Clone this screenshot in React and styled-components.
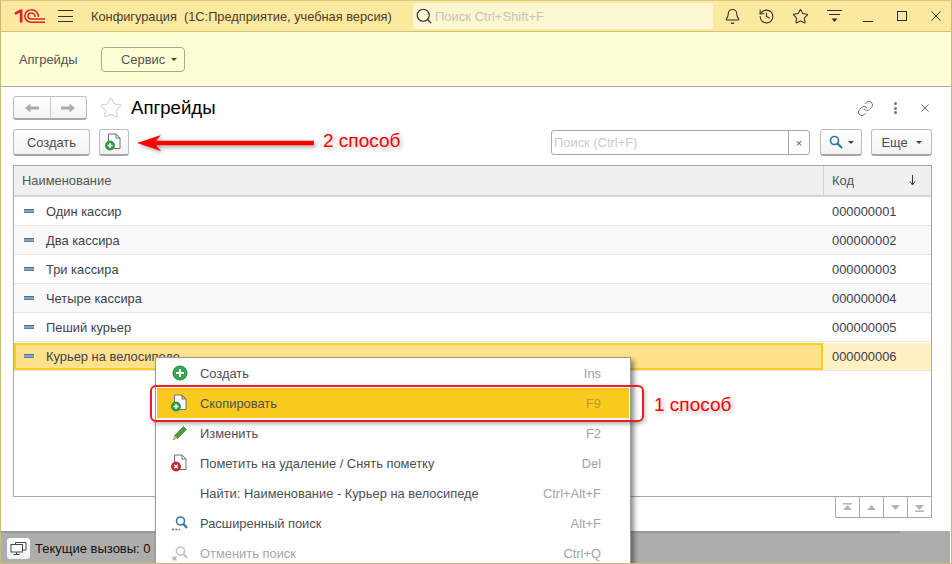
import styled, { createGlobalStyle } from 'styled-components';
import { Bell, History, Star, Link, Search } from 'lucide-react';

const Global = createGlobalStyle`
  html, body { margin: 0; padding: 0; background: #fff; }
  body { font-family: "Liberation Sans", Arial, sans-serif; font-size: 12.9px; color: #4b4b4b; }
`;

const Win = styled.div`
  position: relative;
  width: 952px;
  height: 564px;
  box-sizing: border-box;
  overflow: hidden;
  display: flex;
  flex-direction: column;
  background: #fff;
  border-left: 1px solid #c9bb74;
  border-right: 1px solid #c9bb74;
  border-bottom: 1px solid #c9bb74;
`;

const TopBar = styled.div`
  height: 32px;
  flex: none;
  box-sizing: border-box;
  display: flex;
  align-items: center;
  background: #fbe99f;
  border-top: 1px solid #d8ca80;
  border-bottom: 1px solid #d2c173;
`;

const Logo = styled.svg`
  margin-left: 13px;
  width: 31px;
  height: 14px;
  flex: none;
`;

const Burger = styled.div`
  margin-left: 13px;
  width: 15px;
  height: 12px;
  flex: none;
  box-sizing: border-box;
  border-top: 1px solid #333;
  border-bottom: 1px solid #333;
  display: flex;
  align-items: center;
  &::before { content: ''; display: block; width: 100%; height: 1px; background: #333; }
`;

const TopTitle = styled.div`
  margin-left: 18px;
  width: 322px;
  flex: none;
  font-size: 12.8px;
  white-space: pre;
  color: #4d3b2c;
`;

const TopSearch = styled.div`
  width: 300px;
  height: 26px;
  flex: none;
  box-sizing: border-box;
  display: flex;
  align-items: center;
  gap: 2px;
  padding-left: 2px;
  background: #fdf6d2;
  border-radius: 3px;
  color: #c8c5b4;
  font-size: 13px;
`;

const TopIcons = styled.div`
  display: flex;
  margin-left: 2px;
`;

const TopIcon = styled.div`
  width: 34px;
  height: 24px;
  display: flex;
  align-items: center;
  justify-content: center;
  color: #2f2f2f;
`;

const Section = styled.div`
  height: 55px;
  flex: none;
  box-sizing: border-box;
  display: flex;
  align-items: center;
  padding-left: 18px;
  background: #ffffd6;
  border-bottom: 1px solid #a9a9a9;
`;

const SectionName = styled.div`
  width: 82px;
  font-size: 12.9px;
  color: #55505c;
`;

const SectionBtn = styled.div`
  width: 84px;
  height: 25px;
  box-sizing: border-box;
  display: flex;
  align-items: center;
  padding-left: 19px;
  gap: 6px;
  border: 1px solid #aaa78c;
  border-radius: 4px;
  font-size: 12.9px;
  color: #55505c;
`;

const Caret = styled.span`
  display: inline-block;
  width: 0;
  height: 0;
  border-left: 3px solid transparent;
  border-right: 3px solid transparent;
  border-top: 3px solid #444;
`;

const Form = styled.div`
  flex: 1;
  min-height: 0;
  display: flex;
  flex-direction: column;
  padding: 8px 19px 0 12px;
`;

const FormHead = styled.div`
  height: 26px;
  flex: none;
  margin-right: -8px;
  display: flex;
  align-items: center;
`;

const NavGroup = styled.div`
  width: 74px;
  height: 24px;
  box-sizing: border-box;
  display: flex;
  background: linear-gradient(#fff, #f4f4f4);
  border: 1px solid #bdbdbd;
  border-bottom: 2px solid #a9a9a9;
  border-radius: 3px;
`;

const NavCell = styled.div`
  flex: 1;
  display: flex;
  align-items: center;
  justify-content: center;
  & + & { border-left: 1px solid #c9c9c9; }
`;

const StarWrap = styled.div`
  margin-left: 11px;
  width: 26px;
  height: 26px;
  display: flex;
  align-items: center;
  justify-content: center;
`;

const Title = styled.div`
  margin-left: 7px;
  font-size: 18.6px;
  color: #000;
  flex: 1;
`;

const HeadIcon = styled.div`
  width: 30px;
  height: 24px;
  display: flex;
  align-items: center;
  justify-content: center;
  color: #5f5f5f;
`;

const Dots = styled.div`
  display: flex;
  flex-direction: column;
  gap: 1.5px;
  & i { display: block; width: 3px; height: 3px; border-radius: 50%; background: #777; }
`;

const CmdBar = styled.div`
  margin-top: 8px;
  height: 27px;
  flex: none;
  display: flex;
  align-items: center;
`;

const Btn = styled.div`
  width: ${p => p.$w}px;
  height: 27px;
  flex: none;
  box-sizing: border-box;
  margin-right: ${p => p.$gap || 0}px;
  display: flex;
  align-items: center;
  justify-content: center;
  gap: ${p => p.$inner || 5}px;
  background: linear-gradient(#fff, #f3f3f3);
  border: 1px solid #bdbdbd;
  border-bottom: 2px solid #a6a6a6;
  border-radius: 3px;
  color: #4b4b4b;
`;

const Spacer = styled.div`
  flex: 1;
`;

const FindBox = styled.div`
  width: 259px;
  height: 25px;
  flex: none;
  box-sizing: border-box;
  margin-right: 10px;
  display: flex;
  align-items: center;
  border: 1px solid #a9a9a9;
  border-radius: 3px;
  color: #c9c9c9;
`;

const FindText = styled.div`
  flex: 1;
  padding-left: 2px;
`;

const FindClear = styled.div`
  width: 20px;
  height: 100%;
  display: flex;
  align-items: center;
  justify-content: center;
  border-left: 1px solid #a9a9a9;
  color: #555;
  font-size: 11px;
`;

const Table = styled.div`
  margin-top: 9px;
  flex: 1;
  min-height: 0;
  box-sizing: border-box;
  border: 1px solid #a9a9a9;
`;

const HeadRow = styled.div`
  height: 31px;
  box-sizing: border-box;
  display: grid;
  grid-template-columns: 809px 1fr;
  background: #f0f0f0;
  border-bottom: 2px solid #d4d4d4;
  color: #555;
`;

const HeadCell = styled.div`
  display: flex;
  align-items: center;
  justify-content: space-between;
  padding: 0 15px 0 8px;
  & + & { border-left: 1px solid #d4d4d4; }
`;

const Row = styled.div`
  height: 29px;
  box-sizing: border-box;
  display: grid;
  grid-template-columns: 809px 1fr;
  align-items: stretch;
  background: ${p => (p.$sel ? '#fff' : p.$alt ? '#f9f9f9' : '#fff')};
  border-bottom: 1px solid #e6e6e6;
  color: #3f3f4f;
`;

const NameCell = styled.div`
  display: flex;
  align-items: center;
  gap: 12px;
  box-sizing: border-box;
  padding: ${p => (p.$sel ? '0 0 0 8px' : '1px 0 0 10px')};
  margin-top: ${p => (p.$sel ? '1px' : '0')};
  background: ${p => (p.$sel ? '#ffe28a' : 'transparent')};
  border: ${p => (p.$sel ? '2px solid #fccb22' : '0')};
`;

const CodeCell = styled.div`
  display: flex;
  align-items: center;
  box-sizing: border-box;
  padding: ${p => (p.$sel ? '0 0 0 9px' : '1px 0 0 9px')};
  margin-top: ${p => (p.$sel ? '1px' : '0')};
  background: ${p => (p.$sel ? '#fff1c2' : 'transparent')};
`;

const Dash = styled.span`
  width: 10px;
  height: 4px;
  box-sizing: border-box;
  flex: none;
  background: #7fa6c4;
  border-top: 1px solid #4f6f8a;
  border-bottom: 1px solid #5f7f99;
  position: relative;
  top: -1px;
`;

const Pager = styled.div`
  height: 21px;
  flex: none;
  display: flex;
  justify-content: flex-end;
  margin-bottom: 13px;
`;

const PagerBtn = styled.div`
  width: 24px;
  box-sizing: border-box;
  display: flex;
  align-items: center;
  justify-content: center;
  border: 1px solid #a9a9a9;
  border-top: 0;
  &:first-child { width: 25px; }
  & + & { border-left: 0; }
`;

const StatusBar = styled.div`
  height: 32px;
  flex: none;
  box-sizing: border-box;
  display: flex;
  align-items: center;
  gap: 5px;
  padding: 2px 0 0 6px;
  margin-right: 1px;
  background: linear-gradient(#999, #999) no-repeat 0 0 / 899px 2px, #adadad;
  color: #111;
  font-size: 13px;
`;

const StatusBtn = styled.div`
  width: 23px;
  height: 21px;
  display: flex;
  align-items: center;
  justify-content: center;
  background: linear-gradient(#fff, #f1f1f1);
  border-radius: 3px;
`;

const Menu = styled.div`
  position: absolute;
  left: 154px;
  top: 357px;
  width: 476px;
  box-sizing: border-box;
  background: #fff;
  border: 1px solid #9a9a9a;
  box-shadow: 3px 3px 5px rgba(0, 0, 0, 0.45);
`;

const MenuItem = styled.div`
  height: 30px;
  box-sizing: border-box;
  display: grid;
  grid-template-columns: 43px 1fr auto;
  align-items: center;
  padding: 0 28px 0 0;
  margin: 0 1px;
  color: ${p => (p.$off ? '#a6a6a6' : '#4e4e55')};
  background: ${p => (p.$active ? 'linear-gradient(#e8bc1c, #f9cb1e 4px)' : 'transparent')};
`;

const MenuIcon = styled.div`
  display: flex;
  justify-content: center;
  padding-left: 3px;
`;

const Hotkey = styled.div`
  color: ${p => (p.$active ? '#b99a2a' : '#a3a3a3')};
`;

const Highlight = styled.div`
  position: absolute;
  left: 149px;
  top: 385px;
  width: 494px;
  height: 37px;
  box-sizing: border-box;
  border: 2px solid #ee1c25;
  border-radius: 6px;
  box-shadow: 1px 2px 4px rgba(0, 0, 0, 0.3);
`;

const Note = styled.div`
  position: absolute;
  left: ${p => p.$x}px;
  top: ${p => p.$y}px;
  font-size: 19px;
  color: #f00;
  white-space: nowrap;
  text-shadow: 2px 2px 4px rgba(0, 0, 0, 0.3);
`;

const ArrowSvg = styled.svg`
  position: absolute;
  left: 135px;
  top: 130px;
  filter: drop-shadow(2px 2px 2px rgba(0, 0, 0, 0.35));
`;

const NavArrow = ({ dir }) => (
  <svg width="16" height="12" viewBox="0 0 16 12">
    <path
      d={dir === 'left' ? 'M1 6 L6.5 1.5 V4.5 H15 V7.5 H6.5 V10.5 Z' : 'M15 6 L9.5 1.5 V4.5 H1 V7.5 H9.5 V10.5 Z'}
      fill="#ababab"
    />
  </svg>
);

const FileBase = () => (
  <path d="M3.5 1 H11 L15 5 V15.5 H3.5 Z M11 1 V5 H15" fill="#fff" stroke="#66727f" strokeWidth="1" />
);

const FilePlus = () => (
  <svg width="18" height="18" viewBox="0 0 18 18">
    <FileBase />
    <circle cx="5" cy="12.5" r="4.5" fill="#2ea043" stroke="#177a2c" strokeWidth="0.8" />
    <path d="M2.5 12.5 H7.5 M5 10 V15" stroke="#fff" strokeWidth="1.5" />
  </svg>
);

const FileCross = () => (
  <svg width="18" height="18" viewBox="0 0 18 18">
    <FileBase />
    <circle cx="5" cy="12.5" r="4.5" fill="#d5252c" stroke="#a81a20" strokeWidth="0.8" />
    <path d="M3.2 10.7 L6.8 14.3 M6.8 10.7 L3.2 14.3" stroke="#fff" strokeWidth="1.3" />
  </svg>
);

const PlusCircle = () => (
  <svg width="16" height="16" viewBox="0 0 16 16">
    <circle cx="8" cy="8" r="7" fill="#35a853" stroke="#1f8a3b" />
    <path d="M4 8 H12 M8 4 V12" stroke="#fff" strokeWidth="2" />
  </svg>
);

const Pencil = () => (
  <svg width="16" height="16" viewBox="0 0 16 16">
    <path d="M11.5 1.5 L14.5 4.5 L5.5 13.5 L2.5 10.5 Z" fill="#4f9a3e" stroke="#3c7a30" strokeWidth="0.6" />
    <path d="M2.5 10.5 L5.5 13.5 L1 15 Z" fill="#e0a860" />
    <path d="M1.8 13.4 L2.7 14.3 L1 15 Z" fill="#444" />
  </svg>
);

const FindIcon = ({ off }) => (
  <svg width="18" height="16" viewBox="0 0 18 16">
    <circle cx="9.5" cy="6" r="4" fill="none" stroke={off ? '#c4c4c4' : '#2f77ad'} strokeWidth="1.6" />
    <path d="M12.5 9 L16 13" stroke={off ? '#c4c4c4' : '#2f77ad'} strokeWidth="2.2" />
    {off ? (
      <path d="M1.5 11.5 L5.5 15.5 M5.5 11.5 L1.5 15.5" stroke="#c9a5a5" strokeWidth="1.4" />
    ) : (
      <path d="M1 14.5 H9" stroke="#2f77ad" strokeWidth="1.4" strokeDasharray="2 1.4" />
    )}
  </svg>
);

const PagerIcon = ({ up, bar }) => (
  <svg width="11" height="9" viewBox="0 0 11 9">
    {up ? <path d="M5.5 2 L10 7 H1 Z" fill="#b4b4b4" /> : <path d="M5.5 7 L10 2 H1 Z" fill="#b4b4b4" />}
    {bar && <rect x="1" y={up ? 0 : 7.5} width="9" height="1.5" fill="#b4b4b4" />}
  </svg>
);

const rows = [
  ['Один кассир', '000000001'],
  ['Два кассира', '000000002'],
  ['Три кассира', '000000003'],
  ['Четыре кассира', '000000004'],
  ['Пеший курьер', '000000005'],
  ['Курьер на велосипеде', '000000006'],
];

const menu = [
  { icon: <PlusCircle />, text: 'Создать', key: 'Ins' },
  { icon: <FilePlus />, text: 'Скопировать', key: 'F9', active: true },
  { icon: <Pencil />, text: 'Изменить', key: 'F2' },
  { icon: <FileCross />, text: 'Пометить на удаление / Снять пометку', key: 'Del' },
  { text: 'Найти: Наименование - Курьер на велосипеде', key: 'Ctrl+Alt+F' },
  { icon: <FindIcon />, text: 'Расширенный поиск', key: 'Alt+F' },
  { icon: <FindIcon off />, text: 'Отменить поиск', key: 'Ctrl+Q', off: true },
];

export default function App() {
  return (
    <>
      <Global />
      <Win>
        <TopBar>
          <Logo viewBox="0 0 31 14">
            <path d="M0.5 3.6 L6 0.5 H8.5 V13.5 H5.8 V3.6 L1.5 6 Z" fill="#d9232b" />
            <g fill="none" stroke="#d9232b" strokeWidth="1.5">
              <path d="M24.5 8 A7 7 0 0 0 17 0.8 A6.2 6.2 0 0 0 17 13.2 H31" />
              <path d="M21 8 A3.6 3.6 0 0 0 17 4 A3 3 0 0 0 17 10 H31" />
            </g>
          </Logo>
          <Burger />
          <TopTitle>Конфигурация  (1С:Предприятие, учебная версия)</TopTitle>
          <TopSearch>
            <Search size={18} color="#333" strokeWidth={1.6} />
            Поиск Ctrl+Shift+F
          </TopSearch>
          <TopIcons>
            <TopIcon><Bell size={17} strokeWidth={1.5} /></TopIcon>
            <TopIcon><History size={17} strokeWidth={1.5} /></TopIcon>
            <TopIcon><Star size={17} strokeWidth={1.5} /></TopIcon>
            <TopIcon>
              <svg width="15" height="14" viewBox="0 0 15 14">
                <path d="M0 1.5 H15 M2 5.5 H13" stroke="#2f2f2f" fill="none" />
                <path d="M4.5 9.5 H10.5 L7.5 13 Z" fill="#2f2f2f" />
              </svg>
            </TopIcon>
            <TopIcon>
              <svg width="10" height="14" viewBox="0 0 10 14"><path d="M0 12.5 H10" stroke="#2f2f2f" /></svg>
            </TopIcon>
            <TopIcon>
              <svg width="10" height="10" viewBox="0 0 10 10"><rect x="0.5" y="0.5" width="9" height="9" fill="none" stroke="#2f2f2f" /></svg>
            </TopIcon>
            <TopIcon>
              <svg width="10" height="10" viewBox="0 0 10 10"><path d="M0.5 0.5 L9.5 9.5 M9.5 0.5 L0.5 9.5" stroke="#2f2f2f" /></svg>
            </TopIcon>
          </TopIcons>
        </TopBar>

        <Section>
          <SectionName>Апгрейды</SectionName>
          <SectionBtn>Сервис <Caret /></SectionBtn>
        </Section>

        <Form>
          <FormHead>
            <NavGroup>
              <NavCell><NavArrow dir="left" /></NavCell>
              <NavCell><NavArrow dir="right" /></NavCell>
            </NavGroup>
            <StarWrap><Star size={24} color="#c9c9d0" strokeWidth={1} /></StarWrap>
            <Title>Апгрейды</Title>
            <HeadIcon><Link size={17} strokeWidth={1.2} /></HeadIcon>
            <HeadIcon><Dots><i /><i /><i /></Dots></HeadIcon>
            <HeadIcon>
              <svg width="8" height="8" viewBox="0 0 8 8"><path d="M0.5 0.5 L7.5 7.5 M7.5 0.5 L0.5 7.5" stroke="#666" /></svg>
            </HeadIcon>
          </FormHead>

          <CmdBar>
            <Btn $w={77} $gap={9}>Создать</Btn>
            <Btn $w={30}><FilePlus /></Btn>
            <Spacer />
            <FindBox>
              <FindText>Поиск (Ctrl+F)</FindText>
              <FindClear>×</FindClear>
            </FindBox>
            <Btn $w={42} $gap={9}>
              <svg width="14" height="14" viewBox="0 0 14 14">
                <circle cx="5.5" cy="5.5" r="4" fill="none" stroke="#2f77ad" strokeWidth="1.7" />
                <path d="M8.5 8.5 L13 13" stroke="#2f77ad" strokeWidth="2.2" />
              </svg>
              <Caret />
            </Btn>
            <Btn $w={61} $inner={8}>Еще <Caret /></Btn>
          </CmdBar>

          <Table>
            <HeadRow>
              <HeadCell>Наименование</HeadCell>
              <HeadCell>
                Код
                <svg width="7" height="11" viewBox="0 0 7 11"><path d="M3.5 0 V9 M1 6.5 L3.5 10 L6 6.5" stroke="#333" fill="none" /></svg>
              </HeadCell>
            </HeadRow>
            {rows.map((r, i) => (
              <Row key={r[1]} $alt={i % 2 === 1} $sel={i === 5}>
                <NameCell $sel={i === 5}><Dash />{r[0]}</NameCell>
                <CodeCell $sel={i === 5}>{r[1]}</CodeCell>
              </Row>
            ))}
          </Table>

          <Pager>
            <PagerBtn><PagerIcon up bar /></PagerBtn>
            <PagerBtn><PagerIcon up /></PagerBtn>
            <PagerBtn><PagerIcon /></PagerBtn>
            <PagerBtn><PagerIcon bar /></PagerBtn>
          </Pager>
        </Form>

        <StatusBar>
          <StatusBtn>
            <svg width="17" height="15" viewBox="0 0 17 15">
              <path d="M5.5 3.5 V1.5 H16 V9 H13" fill="none" stroke="#444" />
              <rect x="1" y="3.5" width="11.5" height="7.5" fill="#fff" stroke="#444" />
              <path d="M6.5 11 V13.5 M3.5 13.5 H9.5" stroke="#444" />
            </svg>
          </StatusBtn>
          Текущие вызовы: 0
        </StatusBar>

        <Menu>
          {menu.map(m => (
            <MenuItem key={m.text} $active={m.active} $off={m.off}>
              <MenuIcon>{m.icon}</MenuIcon>
              <div>{m.text}</div>
              <Hotkey $active={m.active}>{m.key}</Hotkey>
            </MenuItem>
          ))}
        </Menu>

        <Highlight />
        <ArrowSvg width="182" height="26" viewBox="0 0 182 26">
          <path d="M1 13 L25 5 L20 10.8 H178 V15.2 H20 L25 21 Z" fill="#f00" />
        </ArrowSvg>
        <Note $x={322} $y={130}>2 способ</Note>
        <Note $x={653} $y={394}>1 способ</Note>
      </Win>
    </>
  );
}
